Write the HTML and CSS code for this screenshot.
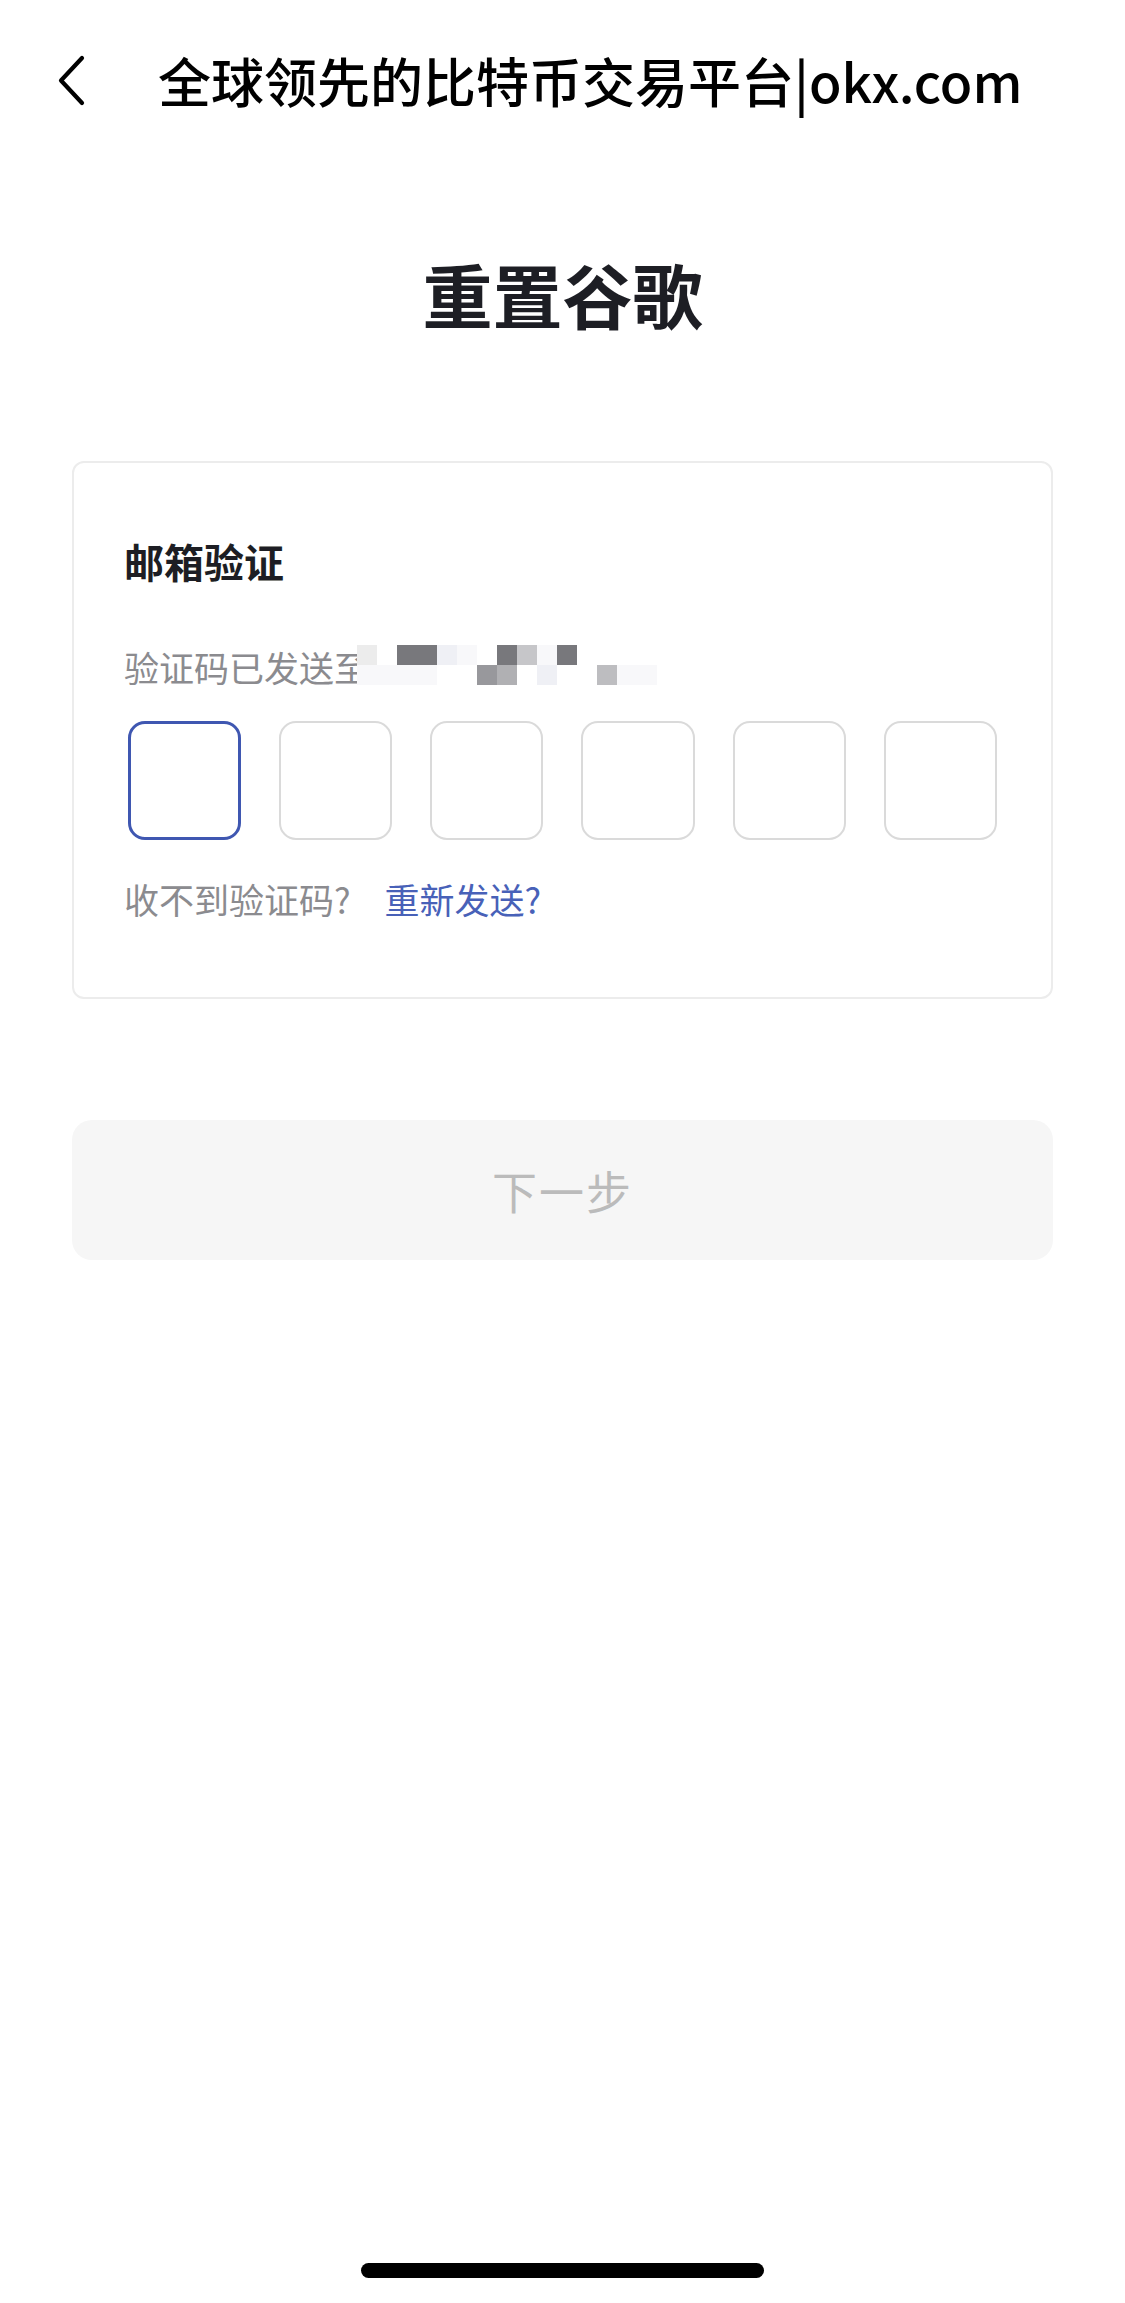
FILE: index.html
```html
<!DOCTYPE html>
<html lang="zh-CN">
<head>
  <meta charset="utf-8" />
  <title>全球领先的比特币交易平台|okx.com</title>
  <link rel="stylesheet" href="styles.css">
</head>
<body>
  <header class="nav">
    <a class="back" href="#" aria-label="返回">
      <svg width="30" height="52" viewBox="0 0 30 52">
        <polyline points="24,3 3,25.5 24,48" fill="none" stroke="#000" stroke-width="4.2" stroke-linecap="round" stroke-linejoin="round" />
      </svg>
    </a>
    <div class="nav-title">全球领先的比特币交易平台|okx.com</div>
  </header>

  <main>
    <h1>重置谷歌</h1>

    <section class="card">
      <h2>邮箱验证</h2>
      <p class="sent">验证码已发送至<span class="mosaic">
        <i class="l"></i><i></i><i class="d"></i><i class="d"></i><i class="v"></i><i class="f"></i><i></i><i class="d"></i><i class="g"></i><i class="f"></i><i class="d"></i><i></i><i></i><i></i><i></i>
        <i class="f"></i><i class="f"></i><i class="f"></i><i class="f"></i><i></i><i></i><i class="m"></i><i class="n"></i><i></i><i class="v"></i><i></i><i></i><i class="s"></i><i class="f"></i><i class="f"></i>
      </span></p>

      <div class="code">
        <div class="digit active"></div>
        <div class="digit"></div>
        <div class="digit"></div>
        <div class="digit"></div>
        <div class="digit"></div>
        <div class="digit"></div>
      </div>

      <p class="resend">收不到验证码?<a href="#">重新发送?</a></p>
    </section>

    <button class="next" disabled>下一步</button>
  </main>

  <footer class="home-bar"><span></span></footer>
</body>
</html>
```

FILE: styles.css
```css
html,
body {
  margin: 0;
  padding: 0;
  background: #fff;
  font-family: "Noto Sans CJK SC", "Noto Sans", sans-serif;
}

body {
  display: flex;
  flex-direction: column;
  min-height: 100vh;
}

.nav {
  display: flex;
  align-items: center;
  height: 160px;
  padding-left: 58px;
  box-sizing: border-box;
}

.back {
  display: flex;
  width: 30px;
  height: 52px;
  margin-top: 1px;
}

.nav-title {
  margin-left: 70px;
  font-size: 53px;
  font-weight: 500;
  color: #000;
  white-space: nowrap;
}

main {
  display: flex;
  flex-direction: column;
  padding: 0 72px;
}

h1 {
  margin: 94px 0 0;
  height: 80px;
  line-height: 80px;
  font-size: 70px;
  font-weight: 700;
  text-align: center;
  color: #1d1e24;
}

.card {
  margin-top: 127px;
  padding: 70px 50px 73px;
  border: 2px solid #ececec;
  border-radius: 12px;
}

h2 {
  margin: 0;
  height: 56px;
  line-height: 56px;
  font-size: 40px;
  font-weight: 700;
  color: #1d1e24;
}

.sent {
  display: flex;
  align-items: center;
  margin: 53px 0 0;
  height: 50px;
  line-height: 50px;
  font-size: 35px;
  color: #8b8b8f;
}

.mosaic {
  display: grid;
  grid-template-columns: repeat(15, 20px);
  grid-auto-rows: 20px;
  margin-left: -12px;
  margin-top: -4px;
}

.mosaic i { display: block; }
.mosaic .d { background: #78787c; }
.mosaic .l { background: #ececec; }
.mosaic .v { background: #eff0f5; }
.mosaic .f { background: #f8f8fa; }
.mosaic .g { background: #c6c6c9; }
.mosaic .m { background: #98989c; }
.mosaic .n { background: #b0b0b3; }
.mosaic .s { background: #bdbdc0; }

.code {
  display: grid;
  grid-template-columns: repeat(6, 1fr);
  gap: 38px;
  margin: 29px 4px 0;
}

.digit {
  height: 119px;
  border: 2.5px solid #dadada;
  border-radius: 17px;
  box-sizing: border-box;
}

.digit.active {
  border: 3px solid #3f57b1;
}

.resend {
  margin: 34px 0 0;
  height: 50px;
  line-height: 50px;
  font-size: 35px;
  color: #8b8b8f;
}

.resend a {
  margin-left: 34px;
  color: #4861b8;
  text-decoration: none;
}

.next {
  margin-top: 121px;
  height: 140px;
  border: 0;
  border-radius: 20px;
  background: #f6f6f6;
  font-family: inherit;
  font-size: 45px;
  letter-spacing: 2px;
  color: #bbbbbb;
}

.home-bar {
  display: flex;
  justify-content: center;
  margin-top: auto;
  padding-bottom: 25px;
}

.home-bar span {
  width: 403px;
  height: 15px;
  border-radius: 8px;
  background: #000;
}
```
